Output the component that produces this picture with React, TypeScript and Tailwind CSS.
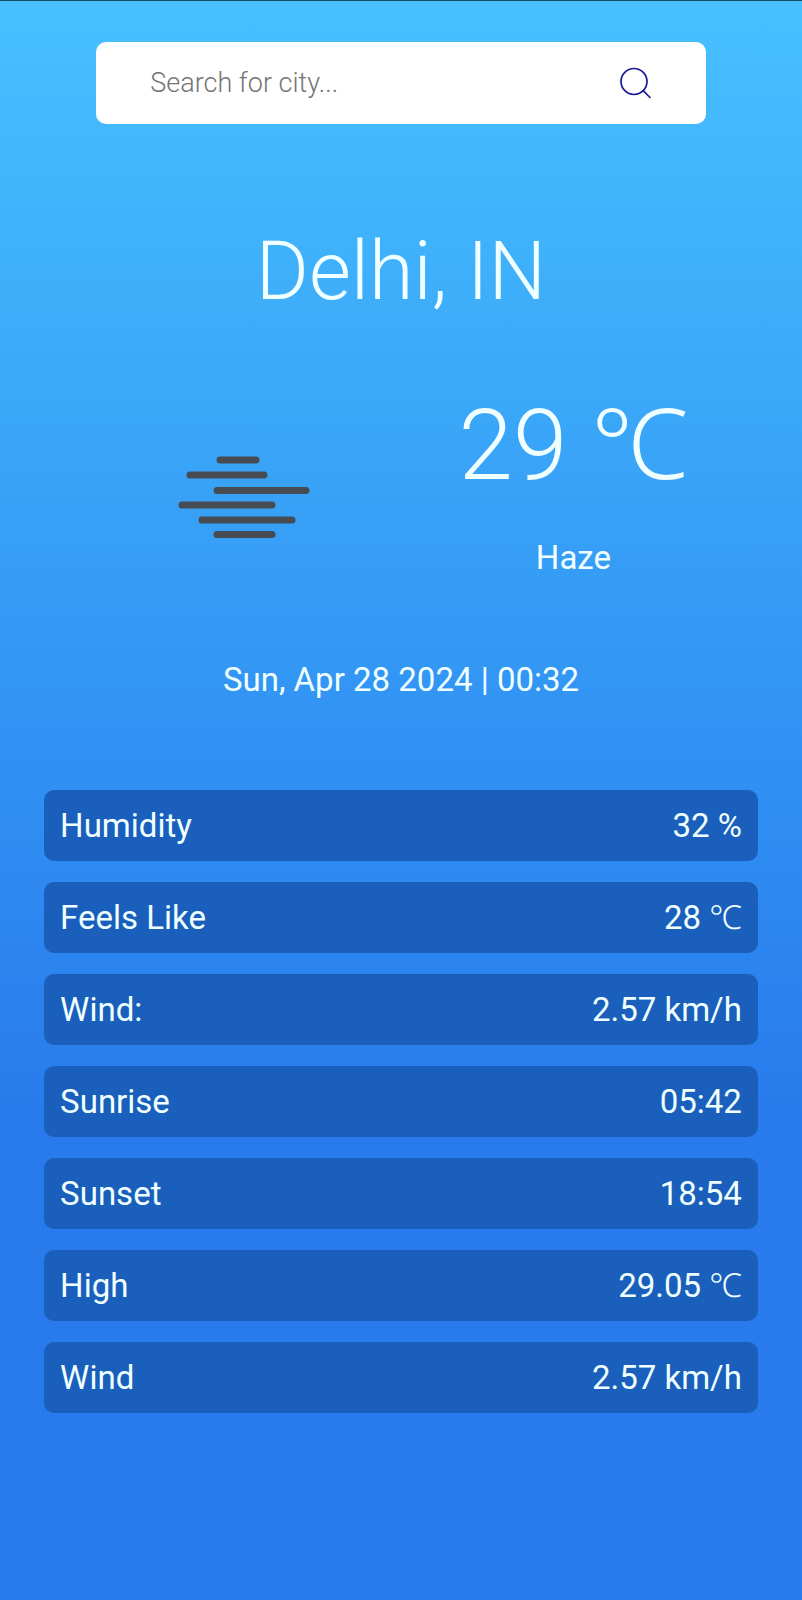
import React from "react";

type Detail = { label: string; value: string; unit?: string };

const details: Detail[] = [
  { label: "Humidity", value: "32 %" },
  { label: "Feels Like", value: "28", unit: "℃" },
  { label: "Wind:", value: "2.57 km/h" },
  { label: "Sunrise", value: "05:42" },
  { label: "Sunset", value: "18:54" },
  { label: "High", value: "29.05", unit: "℃" },
  { label: "Wind", value: "2.57 km/h" },
];

function SearchIcon() {
  return (
    <svg viewBox="0 0 32 32" className="size-8" fill="none" stroke="#1a1a94" strokeWidth="1.7" strokeLinecap="round" aria-hidden="true">
      <circle cx="14" cy="14.5" r="13" />
      <path d="M23.2 23.7 30 30.5" />
    </svg>
  );
}

function HazeIcon() {
  return (
    <svg viewBox="0 0 134 84" className="mt-8 w-[134px] overflow-visible blur-[0.5px]" stroke="#474b52" strokeWidth="7" strokeLinecap="round" aria-hidden="true">
      <path d="M42 4H78M12 19H86M39 34.5H128M4 49H94M24 64H114M39 78.5H94" />
    </svg>
  );
}

export default function App() {
  return (
    <main className="flex min-h-screen flex-col items-center border-t border-[#1c4a66] bg-linear-to-b from-[#48c0ff] to-[#297aec] to-70% font-[Roboto,'Noto_Sans',sans-serif] text-[#f0ffff]">
      <form className="mt-[41px] flex h-[82px] w-[76%] items-center rounded-[10px] bg-white px-[54px]" onSubmit={(e) => e.preventDefault()}>
        <input type="text" aria-label="Search for city" placeholder="Search for city..." className="min-w-0 flex-1 text-[27px] font-light text-gray-700 outline-none placeholder:text-[#757575]" />
        <button type="submit" aria-label="Search">
          <SearchIcon />
        </button>
      </form>
      <h1 className="mt-[98px] text-[81px] leading-[100px] font-light">Delhi, IN</h1>
      <section className="mt-16 ml-4 flex w-[82%] items-center">
        <div className="flex flex-1 justify-center">
          <HazeIcon />
        </div>
        <div className="flex flex-1 flex-col items-center">
          <p className="text-[98px] leading-[120px] font-light">29 ℃</p>
          <p className="mt-8 text-[33px] leading-10">Haze</p>
        </div>
      </section>
      <p className="mt-[82px] text-[33px] leading-10">Sun, Apr 28 2024 | 00:32</p>
      <dl className="mt-[90px] mb-10 flex w-[89%] flex-col gap-[21px]">
        {details.map((d) => (
          <div key={d.label} className="flex h-[71px] items-center justify-between rounded-[10px] bg-[#1a5fbc] px-4 text-[33px]">
            <dt>{d.label}</dt>
            <dd>
              {d.value}
              {d.unit && <span className="font-light"> {d.unit}</span>}
            </dd>
          </div>
        ))}
      </dl>
    </main>
  );
}
